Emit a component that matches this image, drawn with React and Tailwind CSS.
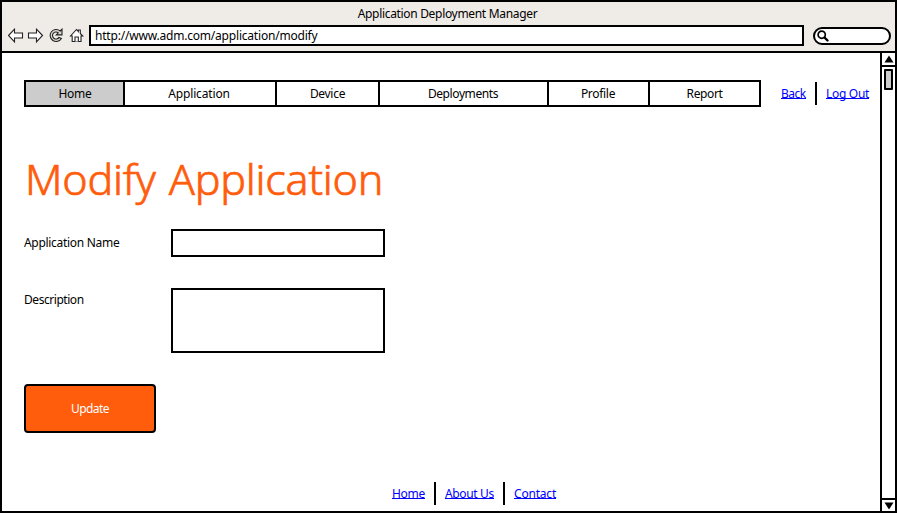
import React from "react";

const tabs = [
  { label: "Home", box: "w-[99px] bg-[#cccccc] border-r-2 pl-px tracking-[-0.25px]" },
  { label: "Application", box: "w-[152px] border-r-2 pr-[2px] tracking-[-0.15px]" },
  { label: "Device", box: "w-[103px] border-r-2 tracking-[-0.3px]" },
  { label: "Deployments", box: "w-[169px] border-r-2 pr-px tracking-[-0.4px]" },
  { label: "Profile", box: "w-[101px] border-r-2 pr-px tracking-[-0.3px]" },
  { label: "Report", box: "w-[109px] tracking-[-0.4px]" },
];

function NavIcons() {
  return (
    <svg className="h-4 w-[81px] shrink-0" viewBox="0 0 81 16" fill="#fff" stroke="#222" strokeWidth="1.1">
      <path d="M0.500 7.500 6.500 1.200V5H14.500V10H6.500V13.800Z" />
      <path d="M34.500 7.500 28.500 1.200V5H20.500V10H28.500V13.800Z" />
      <path
        d="M52.200 3 54 1.200V6.900H48.300L50.300 4.900A3.500 3.500 0 1 0 51 9.400L53.400 10.400A6 6 0 1 1 52.200 3Z"
        fill="#d8d5d0"
      />
      <path d="M62.500 8 68.500 1.500 70.300 3.500V2H72.300V5.500L74.700 8H73V13.500H64.200V8Z" />
      <path d="M67 13.500V9H70.300V13.500" />
    </svg>
  );
}

function BrowserBar() {
  return (
    <header className="h-[51px] shrink-0 border-b-2 border-black bg-[#efebe7]">
      <h1 className="h-[23px] pr-[2px] text-center leading-[24px] tracking-[-0.32px]">Application Deployment Manager</h1>
      <div className="flex items-center pl-[6px] pr-1">
        <NavIcons />
        <div className="h-[21px] w-[715px] border-2 border-black bg-white pl-1 leading-[18px] tracking-[-0.2px]">
          http://www.adm.com/application/modify
        </div>
        <div className="ml-[9px] mt-px flex h-[18px] w-[78px] items-center rounded-full border-2 border-black bg-white pl-[2px]">
          <svg className="h-3 w-3" viewBox="0 0 12 12" fill="none" stroke="#000">
            <circle cx="4.700" cy="4.700" r="3.600" strokeWidth="1.700" />
            <path d="M7.500 7.500 10.500 10.500" strokeWidth="2.400" strokeLinecap="round" />
          </svg>
        </div>
      </div>
    </header>
  );
}

function Scrollbar() {
  return (
    <aside className="flex w-[15px] shrink-0 flex-col border-l-2 border-black">
      <div className="flex h-[14px] justify-center border-b-2 border-black pt-[2px]">
        <svg className="h-2 w-[10px]" viewBox="0 0 10 8">
          <path d="M5 0.500 9.500 7.500H0.500Z" />
        </svg>
      </div>
      <div className="mx-[2px] mt-[2px] h-[21px] rounded-[1px] border-2 border-black bg-[#cccccc]" />
      <div className="mt-auto flex h-[13px] justify-center border-t-2 border-black pt-[2px]">
        <svg className="h-2 w-[10px]" viewBox="0 0 10 8">
          <path d="M0.500 0.500H9.500L5 7.500Z" />
        </svg>
      </div>
    </aside>
  );
}

function Link({ children, className }) {
  return (
    <a href="#" className={`h-[11px] border-b border-[#0000ff] leading-[11px] whitespace-nowrap text-[#0000ff] ${className}`}>
      {children}
    </a>
  );
}

function Divider() {
  return <span className="h-[23px] w-[2px] shrink-0 bg-black" />;
}

export default function App() {
  return (
    <div className="flex h-[513px] w-[897px] flex-col overflow-hidden border-2 border-black bg-white font-['Noto_Sans','Open_Sans',sans-serif] text-[12px] text-black">
      <BrowserBar />
      <div className="flex min-h-0 flex-1">
        <main className="flex min-w-0 flex-1 flex-col pl-[22px] pt-[27px]">
          <div className="flex">
            <nav className="flex h-[27px] w-[737px] shrink-0 border-2 border-black">
              {tabs.map((tab) => (
                <a key={tab.label} href="#" className={`border-black text-center leading-[23px] ${tab.box}`}>
                  {tab.label}
                </a>
              ))}
            </nav>
            <div className="ml-5 flex h-[27px] items-center gap-[9px]">
              <Link className="w-[25px] tracking-[-0.5px]">Back</Link>
              <Divider />
              <Link className="w-[43px] tracking-[-0.3px]">Log Out</Link>
            </div>
          </div>
          <h2 className="ml-px mt-[42px] h-[80px] text-[43px] font-light leading-[60px] tracking-[-0.22px] [word-spacing:2px] [-webkit-text-stroke:0.7px_#ff5c0b] text-[#ff5c0b] whitespace-nowrap">
            Modify Application
          </h2>
          <form className="flex flex-col">
            <label className="flex h-[59px]">
              <span className="w-[147px] leading-[27px] tracking-[-0.3px]">Application Name</span>
              <input className="h-[28px] w-[214px] border-2 border-black" />
            </label>
            <label className="flex h-[96px]">
              <span className="w-[147px] leading-[23px] tracking-[-0.45px]">Description</span>
              <textarea className="h-[65px] w-[214px] resize-none border-2 border-black" />
            </label>
            <button type="button" className="h-[49px] w-[132px] rounded-[4px] border-2 border-black bg-[#ff5c0b] tracking-[-0.55px] text-white">
              Update
            </button>
          </form>
          <footer className="ml-[368px] mt-[49px] flex h-[23px] items-center gap-[9px]">
            <Link className="w-[33px] tracking-[-0.3px]">Home</Link>
            <Divider />
            <Link className="w-[49px] tracking-[-0.35px]">About Us</Link>
            <Divider />
            <Link className="w-[42px] tracking-[-0.2px]">Contact</Link>
          </footer>
        </main>
        <Scrollbar />
      </div>
    </div>
  );
}
